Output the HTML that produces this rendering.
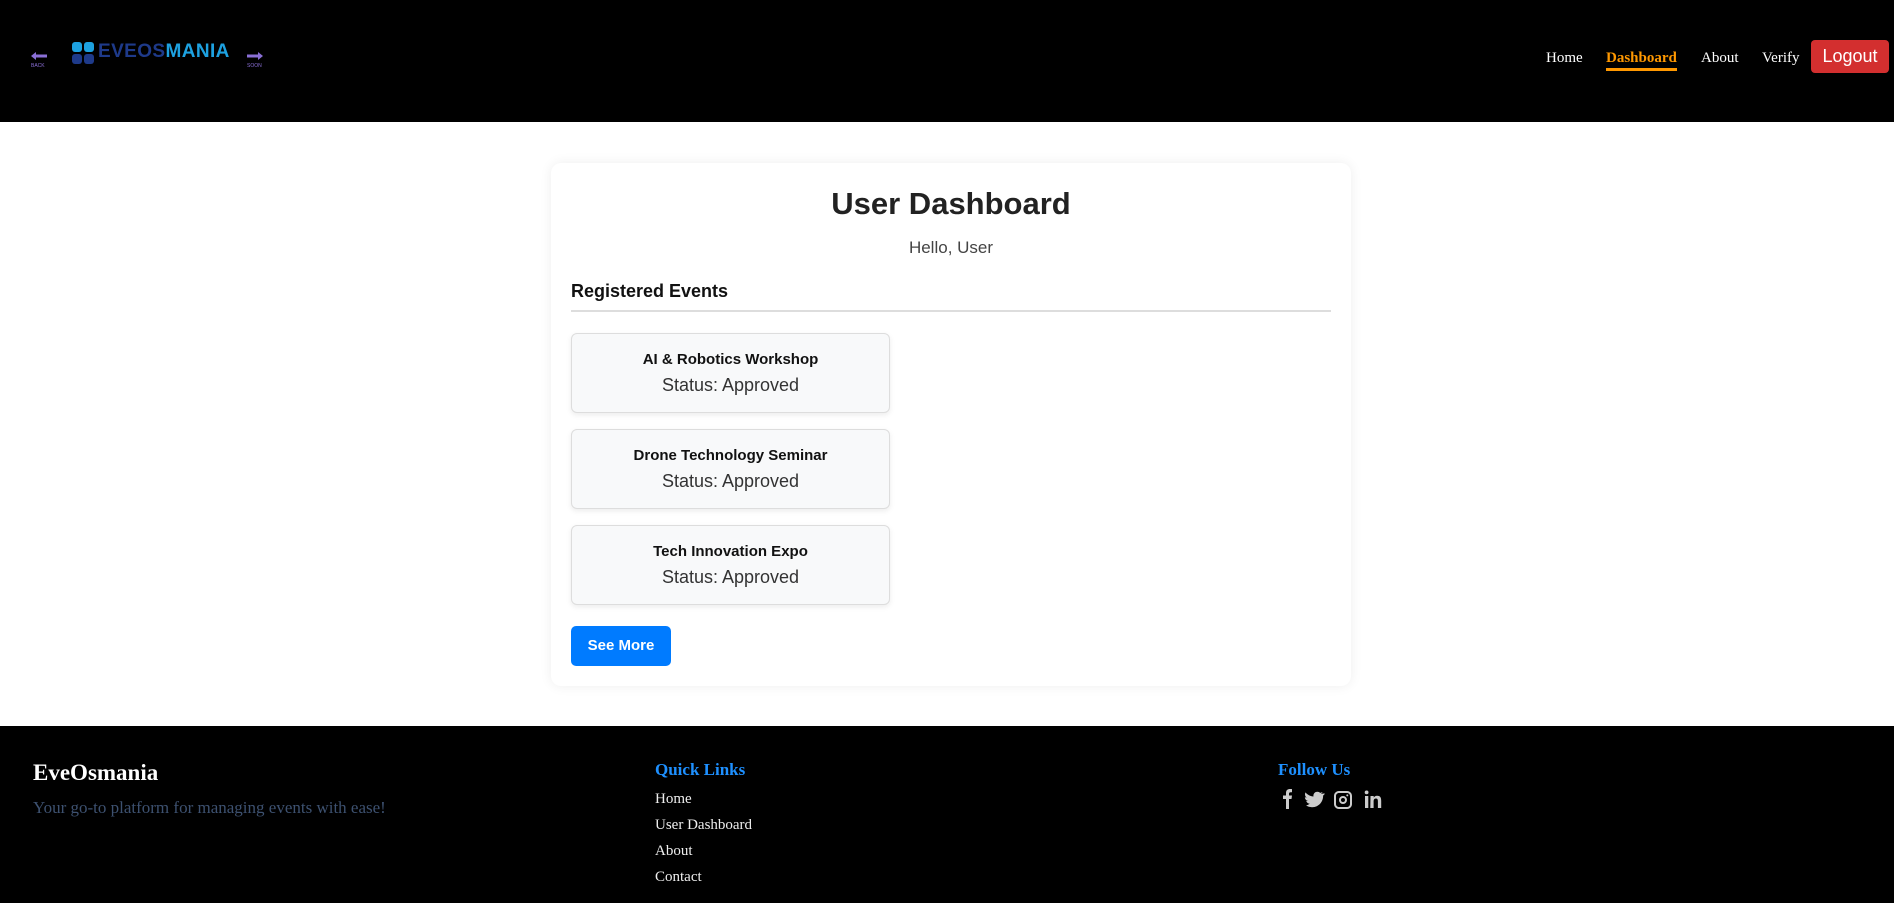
<!DOCTYPE html>
<html><head><meta charset="utf-8"><style>
*{margin:0;padding:0;box-sizing:border-box}
body{width:1894px;height:903px;overflow:hidden;background:#fff;font-family:"Liberation Sans",sans-serif;position:relative}
.abs{position:absolute}
header{position:absolute;left:0;top:0;width:1894px;height:122px;background:#000}
.nav{font-family:"Liberation Serif",serif;font-size:15px;color:#fff;position:absolute;top:50px}
.card{position:absolute;left:551px;top:163px;width:800px;height:523px;background:#fff;border-radius:10px;box-shadow:0 0 12px rgba(0,0,0,.07)}
.ev{position:absolute;left:571px;width:319px;height:80px;background:#f8f9fa;border:1px solid #ddd;border-radius:6px;box-shadow:0 2px 6px rgba(0,0,0,.08);text-align:center}
.ev b{display:block;font-size:15px;color:#111;margin-top:17px}
.ev span{display:block;font-size:18px;color:#333;margin-top:7px}
footer{position:absolute;left:0;top:726px;width:1894px;height:177px;background:#000;font-family:"Liberation Serif",serif}
.fl{position:absolute;left:655px;font-size:15px;color:#eee}
</style></head><body>
<header>
<svg class="abs" style="left:30px;top:51px" width="18" height="18" viewBox="0 0 18 18"><path d="M1 5 L6 1 L6 3.5 L17 3.5 L17 6.5 L6 6.5 L6 9Z" fill="#8a6fd6"/><text x="1" y="16" font-size="5" fill="#8a6fd6" font-family="Liberation Sans">BACK</text></svg>
<svg class="abs" style="left:72px;top:42px" width="22" height="22" viewBox="0 0 22 22"><rect x="0" y="0" width="10" height="10" rx="3" fill="#1da1e0"/><rect x="12" y="0" width="10" height="10" rx="3" fill="#1da1e0"/><rect x="0" y="12" width="10" height="10" rx="3" fill="#1e3a8a"/><rect x="12" y="12" width="10" height="10" rx="3" fill="#1e3a8a"/></svg>
<div class="abs" style="left:98px;top:41px;font-size:19px;font-weight:bold;letter-spacing:.4px"><span style="color:#1e3a8a">EVEOS</span><span style="color:#1da1e0">MANIA</span></div>
<svg class="abs" style="left:246px;top:51px" width="18" height="18" viewBox="0 0 18 18"><path d="M17 5 L12 1 L12 3.5 L1 3.5 L1 6.5 L12 6.5 L12 9Z" fill="#8a6fd6"/><text x="1" y="16" font-size="5" fill="#8a6fd6" font-family="Liberation Sans">SOON</text></svg>
<div class="nav" style="left:1546px">Home</div>
<div class="nav" style="left:1606px;color:#ff9800;font-weight:bold;border-bottom:3px solid #ff9800;padding-bottom:1px">Dashboard</div>
<div class="nav" style="left:1701px">About</div>
<div class="nav" style="left:1762px">Verify</div>
<div class="abs" style="left:1811px;top:40px;width:78px;height:33px;background:#d32f2f;border-radius:4px;color:#fff;font-size:18px;text-align:center;line-height:32px">Logout</div>
</header>
<div class="card"></div>
<div class="abs" style="left:551px;width:800px;top:186px;text-align:center;font-size:31px;font-weight:bold;color:#222">User Dashboard</div>
<div class="abs" style="left:551px;width:800px;top:238px;text-align:center;font-size:17px;color:#444">Hello, User</div>
<div class="abs" style="left:571px;top:281px;font-size:18px;font-weight:bold;color:#111">Registered Events</div>
<div class="abs" style="left:571px;top:310px;width:760px;height:2px;background:#ddd"></div>
<div class="ev" style="top:333px"><b>AI &amp; Robotics Workshop</b><span>Status: Approved</span></div>
<div class="ev" style="top:429px"><b>Drone Technology Seminar</b><span>Status: Approved</span></div>
<div class="ev" style="top:525px"><b>Tech Innovation Expo</b><span>Status: Approved</span></div>
<div class="abs" style="left:571px;top:626px;width:100px;height:40px;background:#007bff;border-radius:5px;color:#fff;font-size:15px;font-weight:bold;text-align:center;line-height:40px">See More</div>
<footer>
<div class="abs" style="left:33px;top:34px;font-size:23px;font-weight:bold;color:#fff">EveOsmania</div>
<div class="abs" style="left:33px;top:72px;font-size:17px;color:#3d5170">Your go-to platform for managing events with ease!</div>
<div class="abs" style="left:655px;top:34px;font-size:17px;font-weight:bold;color:#1e90ff">Quick Links</div>
<div class="fl" style="top:65px">Home</div>
<div class="fl" style="top:91px">User Dashboard</div>
<div class="fl" style="top:117px">About</div>
<div class="fl" style="top:143px">Contact</div>
<div class="abs" style="left:1278px;top:34px;font-size:17px;font-weight:bold;color:#1e90ff">Follow Us</div>
<svg class="abs" style="left:1279px;top:62px" width="120" height="22" viewBox="0 0 120 22" fill="#ccc">
<path d="M7 21V11H4V7.5H7V5C7 2 8.8 1 11 1C12 1 13 1.1 13 1.1V4.2H11.6C10.3 4.2 10 5 10 5.8V7.5H13L12.5 11H10V21Z"/>
<g transform="translate(4,0)"><path d="M40 5.5c-.7.3-1.4.5-2.2.6.8-.5 1.4-1.2 1.7-2.1-.7.4-1.6.8-2.4.9-.7-.8-1.7-1.2-2.8-1.2-2.1 0-3.9 1.7-3.9 3.9 0 .3 0 .6.1.9-3.2-.2-6.1-1.7-8-4.1-.3.6-.5 1.2-.5 2 0 1.3.7 2.5 1.7 3.2-.6 0-1.200-.2-1.8-.5 0 1.9 1.3 3.5 3.1 3.8-.6.2-1.2.2-1.8.1.5 1.5 1.9 2.7 3.6 2.7-1.3 1-3 1.7-4.8 1.7H23c1.7 1.100 3.8 1.8 6 1.8 7.2 0 11.1-6 11.1-11.1v-.5c.8-.6 1.4-1.3 1.9-2z"/></g>
<g transform="translate(8,0)"><path d="M52 3h8c2.8 0 5 2.2 5 5v8c0 2.8-2.2 5-5 5h-8c-2.8 0-5-2.2-5-5V8c0-2.8 2.2-5 5-5zm0 2c-1.7 0-3 1.3-3 3v8c0 1.7 1.3 3 3 3h8c1.7 0 3-1.3 3-3V8c0-1.7-1.3-3-3-3zm4 3a4 4 0 110 8 4 4 0 010-8zm0 2a2 2 0 100 4 2 2 0 000-4zm4.3-3.6a1 1 0 110 2 1 1 0 010-2z"/></g>
<g transform="translate(14,0)"><path d="M72 8h3.3v12H72zM73.6 2.5a1.9 1.9 0 110 3.8 1.9 1.9 0 010-3.8zM77.5 8h3.2v1.6c.5-.9 1.6-1.9 3.4-1.9 3.5 0 4.1 2.3 4.1 5.2V20h-3.3v-6.2c0-1.5 0-3.3-2-3.3s-2.3 1.6-2.3 3.2V20h-3.3z"/></g>
</svg>
</footer>
</body></html>
